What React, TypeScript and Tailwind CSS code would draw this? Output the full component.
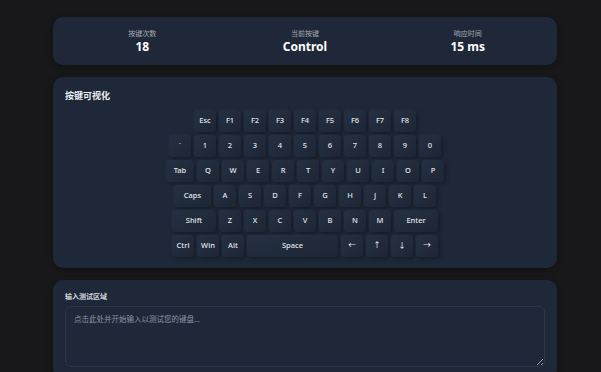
import React from 'react';

type Key = { label: string; w?: string };

const rows: Key[][] = [
  [{ label: 'Esc' }, { label: 'F1' }, { label: 'F2' }, { label: 'F3' }, { label: 'F4' }, { label: 'F5' }, { label: 'F6' }, { label: 'F7' }, { label: 'F8' }],
  ['`', '1', '2', '3', '4', '5', '6', '7', '8', '9', '0'].map((label) => ({ label })),
  [{ label: 'Tab', w: 'w-[28px]' }, ...['Q', 'W', 'E', 'R', 'T', 'Y', 'U', 'I', 'O', 'P'].map((label) => ({ label }))],
  [{ label: 'Caps', w: 'w-[37px]' }, ...['A', 'S', 'D', 'F', 'G', 'H', 'J', 'K', 'L'].map((label) => ({ label }))],
  [
    { label: 'Shift', w: 'w-[44px]' },
    ...['Z', 'X', 'C', 'V', 'B', 'N', 'M'].map((label) => ({ label })),
    { label: 'Enter', w: 'w-[44px]' },
  ],
  [
    { label: 'Ctrl' },
    { label: 'Win' },
    { label: 'Alt' },
    { label: 'Space', w: 'w-[91px]' },
    { label: '←' },
    { label: '↑' },
    { label: '↓' },
    { label: '→' },
  ],
];

const stats = [
  { label: '按键次数', value: '18' },
  { label: '当前按键', value: 'Control' },
  { label: '响应时间', value: '15 ms' },
];

const App: React.FC = () => {
  return (
    <div className="min-h-screen bg-[#18181a] pt-[17px] pl-[53px] pb-6 font-['Noto_Sans','Noto_Sans_CJK_SC',sans-serif]">
      <div className="w-[504px] flex flex-col gap-[12px]">
        {/* Stats */}
        <div className="bg-[#1f2839] rounded-[10px] px-2 pt-[12px] pb-[11px] grid grid-cols-3 shadow-[0_2px_6px_rgba(0,0,0,0.3)]">
          {stats.map((s) => (
            <div key={s.label} className="flex flex-col items-center">
              <span className="text-[7px] leading-[10px] text-[#a3a9b3]">{s.label}</span>
              <span className="text-[12px] leading-[15px] font-bold text-white">{s.value}</span>
            </div>
          ))}
        </div>

        {/* Keyboard */}
        <div className="bg-[#1f2839] rounded-[10px] px-3 pt-[12px] pb-[11px] shadow-[0_2px_6px_rgba(0,0,0,0.3)]">
          <h2 className="text-[9px] leading-[14px] font-semibold text-[#eceef1]">按键可视化</h2>
          <div className="mt-[7px] flex flex-col gap-[3px] items-center">
            {rows.map((row, i) => (
              <div key={i} className="flex gap-[3px]">
                {row.map((k) => (
                  <div
                    key={k.label}
                    className={`${k.w ?? 'w-[22px]'} h-[22px] rounded-[4px] flex items-center justify-center text-[7.5px] font-medium text-[#e2e5ea] bg-gradient-to-br from-[#243042] to-[#1d2635] shadow-[2px_2px_4px_rgba(0,0,0,0.3),-1px_-1px_2px_rgba(255,255,255,0.03)]`}
                  >
                    {k.label}
                  </div>
                ))}
              </div>
            ))}
          </div>
        </div>

        {/* Input */}
        <div className="bg-[#1f2839] rounded-[10px] px-3 pt-[12px] pb-3 shadow-[0_2px_6px_rgba(0,0,0,0.3)]">
          <label className="block text-[7px] leading-[10px] font-semibold text-[#d1d5db]">输入测试区域</label>
          <textarea
            className="mt-[4px] block w-full h-[61px] rounded-[6px] border border-[#2c3648] bg-[#1f2839] px-[8px] py-[7px] text-[7.5px] text-[#e5e7eb] placeholder:text-[#8b93a1] outline-none"
            placeholder="点击此处并开始输入以测试您的键盘..."
          />
        </div>
      </div>
    </div>
  );
};

export default App;
